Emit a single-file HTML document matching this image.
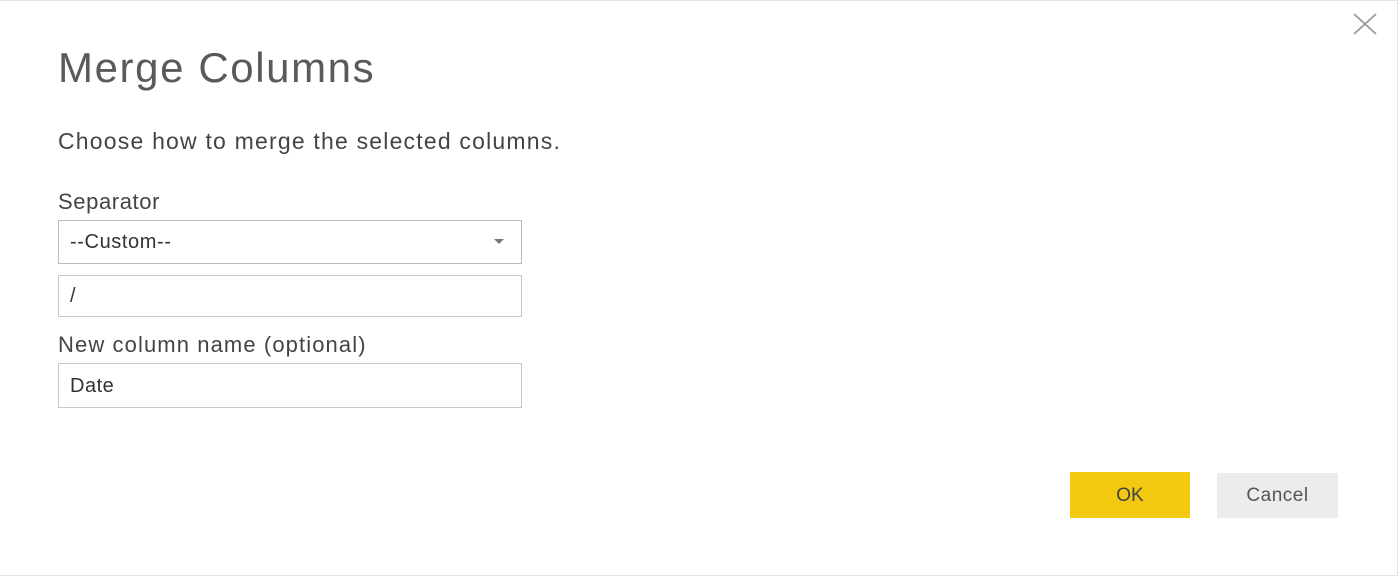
<!DOCTYPE html>
<html><head><style>
body{margin:0;width:1398px;height:576px;background:#fff;font-family:"Liberation Sans",sans-serif;position:relative;overflow:hidden}
.b{position:absolute;box-sizing:border-box;border:1px solid #c8c8c8;background:#fff}
.t{position:absolute;white-space:nowrap}
</style></head><body>
<div style="position:absolute;left:0;top:0;width:1398px;height:576px;box-sizing:border-box;border:1px solid #e2e2e2;border-left:none"></div>
<svg style="position:absolute;left:1353px;top:13px" width="24" height="22"><path d="M1 1L23 21M23 1L1 21" stroke="#999" stroke-width="1.8"/></svg>
<div class="t" style="left:58px;top:44px;font-size:42px;color:#5a5a5a;letter-spacing:1.6px">Merge Columns</div>
<div class="t" style="left:58px;top:128px;font-size:23px;color:#444;letter-spacing:1.2px">Choose how to merge the selected columns.</div>
<div class="t" style="left:58px;top:189px;font-size:22px;color:#444;letter-spacing:0.6px">Separator</div>
<div class="b" style="left:58px;top:220px;width:464px;height:44px;border-color:#bbb"></div>
<div class="t" style="left:70px;top:231px;font-size:20px;color:#333;letter-spacing:0.6px">--Custom--</div>
<svg style="position:absolute;left:493px;top:238px" width="12" height="8"><path d="M1 1L11 1L6 6Z" fill="#777"/></svg>
<div class="b" style="left:58px;top:275px;width:464px;height:42px"></div>
<div class="t" style="left:70px;top:285px;font-size:20px;color:#333">/</div>
<div class="t" style="left:58px;top:332px;font-size:22px;color:#444;letter-spacing:1.1px">New column name (optional)</div>
<div class="b" style="left:58px;top:363px;width:464px;height:45px"></div>
<div class="t" style="left:70px;top:375px;font-size:20px;color:#333;letter-spacing:0.5px">Date</div>
<div style="position:absolute;left:1070px;top:472px;width:120px;height:46px;background:#f2c811"></div>
<div class="t" style="left:1070px;top:485px;width:120px;text-align:center;font-size:19px;color:#444">OK</div>
<div style="position:absolute;left:1217px;top:473px;width:121px;height:45px;background:#ececec"></div>
<div class="t" style="left:1217px;top:485px;width:121px;text-align:center;font-size:19px;color:#555;letter-spacing:0.5px">Cancel</div>
</body></html>
